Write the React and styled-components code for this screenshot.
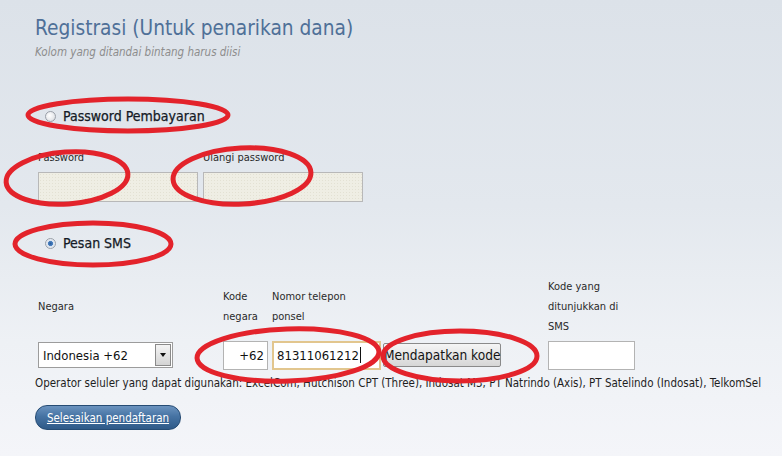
import React from "react";
import styled, { createGlobalStyle } from "styled-components";

const Global = createGlobalStyle`
  html, body { margin: 0; padding: 0; }
  body { font-family: "DejaVu Sans Condensed", "DejaVu Sans", sans-serif; }
`;

const Page = styled.div`
  position: relative;
  width: 782px;
  height: 456px;
  box-sizing: border-box;
  padding: 15px 0 0 35px;
  overflow: hidden;
  background: linear-gradient(180deg, #dce2e9 0%, #e3e8ee 45%, #eef1f5 75%, #f4f5f9 100%);
  color: #1c1c1c;
`;

const Title = styled.h1`
  margin: 0;
  font-size: 20.7px;
  line-height: 26px;
  font-weight: normal;
  color: #4f7098;
`;

const Subtitle = styled.div`
  margin-top: 3px;
  font-size: 11.5px;
  line-height: 16px;
  font-style: italic;
  color: #8d8d8d;
`;

const RadioRow = styled.label`
  display: flex;
  align-items: center;
  gap: 7px;
  margin-left: 10px;
  margin-top: ${(p) => p.$mt}px;
  height: 20px;
  font-size: 14px;
  font-weight: normal;
  color: #141a26;
  -webkit-text-stroke: 0.25px #141a26;
`;

const Radio = styled.span`
  width: 11px;
  height: 11px;
  border-radius: 50%;
  border: 1px solid #9aa0a8;
  background: ${(p) =>
    p.$checked
      ? "radial-gradient(circle at 50% 50%, #2c5d9c 0, #4a80c0 35%, #d9e2ee 45%, #f2f4f7 100%)"
      : "radial-gradient(circle at 40% 40%, #ffffff 0, #e6e8eb 60%, #c9ccd1 100%)"};
  box-sizing: border-box;
`;

const PwGroup = styled.div`
  display: flex;
  gap: 5px;
  margin-left: 3px;
  margin-top: 24px;
`;

const PwField = styled.div`
  display: flex;
  flex-direction: column;
  width: 160px;
`;

const SmallLabel = styled.div`
  font-size: 11px;
  line-height: 15px;
  color: #2a2a2a;
  height: 15px;
  margin-bottom: 7px;
`;

const PwInput = styled.div`
  height: 28px;
  border: 1px solid #b8b8b8;
  background-color: #efeee4;
  background-image: radial-gradient(#e3e1d3 0.6px, transparent 0.8px);
  background-size: 3px 3px;
`;

const PhoneGrid = styled.div`
  display: grid;
  grid-template-columns: 185px 49px 111px 165px 100px;
  grid-template-rows: 60px 36px;
  margin-left: 3px;
  margin-top: 24px;
`;

const HeadCell = styled.div`
  width: ${(p) => p.$w}px;
  align-self: center;
  font-size: 11px;
  line-height: 20px;
  color: #2a2a2a;
`;

const Cell = styled.div`
  align-self: center;
  display: flex;
`;

const Select = styled.div`
  width: 129px;
  height: 24px;
  border: 1px solid #9c9c9c;
  background: #fff;
  display: flex;
  align-items: center;
  justify-content: space-between;
  font-size: 13px;
  color: #111;
  padding-left: 4px;
  box-sizing: content-box;
`;

const SelectBtn = styled.span`
  width: 14px;
  height: 20px;
  margin-right: 1px;
  border: 1px solid #8a8a8a;
  background: linear-gradient(180deg, #f4f4f4, #d4d4d4);
  display: flex;
  align-items: center;
  justify-content: center;
  &::after {
    content: "";
    border-left: 3px solid transparent;
    border-right: 3px solid transparent;
    border-top: 4px solid #111;
  }
`;

const TextBox = styled.div`
  width: ${(p) => p.$w}px;
  height: 29px;
  box-sizing: border-box;
  border: ${(p) => (p.$focus ? "2px solid #e2c68e" : "1px solid #b3b3b3")};
  background: #fff;
  display: flex;
  align-items: center;
  justify-content: ${(p) => (p.$right ? "flex-end" : "flex-start")};
  padding: 0 3px;
  font-size: 13px;
  color: #111;
`;

const Caret = styled.span`
  display: inline-block;
  width: 1px;
  height: 16px;
  background: #111;
  margin-left: 1px;
`;

const GrayButton = styled.button`
  height: 24px;
  width: 118px;
  padding: 0;
  border: 1px solid #8a8a8a;
  border-radius: 2px;
  background: linear-gradient(180deg, #f5f5f5 0%, #e6e6e6 50%, #d6d6d6 100%);
  font-family: inherit;
  font-size: 13.6px;
  color: #141414;
  white-space: nowrap;
`;

const OperatorText = styled.div`
  margin-top: 2px;
  font-size: 11.5px;
  line-height: 16px;
  color: #1e1e1e;
  white-space: nowrap;
`;

const SubmitButton = styled.button`
  margin-top: 14px;
  height: 25px;
  width: 146px;
  border: 1px solid #264c74;
  border-radius: 12px;
  background: linear-gradient(180deg, #6b93bf 0%, #4673a3 45%, #2f5a88 100%);
  color: #fff;
  font-family: inherit;
  font-size: 11.5px;
  text-decoration: underline;
  padding: 0;
  display: block;
`;

const Overlay = styled.svg`
  position: absolute;
  left: 0;
  top: 0;
  pointer-events: none;
`;

export default function App() {
  return (
    <Page>
      <Global />
      <Title>Registrasi (Untuk penarikan dana)</Title>
      <Subtitle>Kolom yang ditandai bintang harus diisi</Subtitle>

      <RadioRow $mt={46}>
        <Radio />
        Password Pembayaran
      </RadioRow>

      <PwGroup>
        <PwField>
          <SmallLabel>Password</SmallLabel>
          <PwInput />
        </PwField>
        <PwField>
          <SmallLabel>Ulangi password</SmallLabel>
          <PwInput />
        </PwField>
      </PwGroup>

      <RadioRow $mt={31}>
        <Radio $checked />
        Pesan SMS
      </RadioRow>

      <PhoneGrid>
        <HeadCell $w={133}>Negara</HeadCell>
        <HeadCell $w={45}>Kode negara</HeadCell>
        <HeadCell $w={100}>Nomor telepon ponsel</HeadCell>
        <HeadCell $w={118} />
        <HeadCell $w={82}>Kode yang ditunjukkan di SMS</HeadCell>

        <Cell>
          <Select>
            Indonesia +62
            <SelectBtn />
          </Select>
        </Cell>
        <Cell>
          <TextBox $w={45} $right>+62</TextBox>
        </Cell>
        <Cell>
          <TextBox $w={109} $focus>
            81311061212
            <Caret />
          </TextBox>
        </Cell>
        <Cell>
          <GrayButton>Mendapatkan kode</GrayButton>
        </Cell>
        <Cell>
          <TextBox $w={87} />
        </Cell>
      </PhoneGrid>

      <OperatorText>
        Operator seluler yang dapat digunakan: ExcelCom, Hutchison CPT (Three), Indosat M3, PT Natrindo (Axis), PT Satelindo (Indosat), TelkomSel
      </OperatorText>

      <SubmitButton>Selesaikan pendaftaran</SubmitButton>

      <Overlay width="782" height="456" viewBox="0 0 782 456">
        <g fill="none" stroke="#e3232b" strokeWidth="5">
          <ellipse cx="128" cy="115" rx="100" ry="16" />
          <ellipse cx="67" cy="178" rx="61" ry="26" transform="rotate(-4 67 178)" />
          <ellipse cx="242" cy="176" rx="69" ry="28" transform="rotate(-3 242 176)" />
          <ellipse cx="93" cy="244" rx="78" ry="21" />
          <ellipse cx="288" cy="355" rx="91" ry="26" transform="rotate(-2 288 355)" />
          <ellipse cx="460" cy="356" rx="77" ry="25" />
        </g>
      </Overlay>
    </Page>
  );
}
